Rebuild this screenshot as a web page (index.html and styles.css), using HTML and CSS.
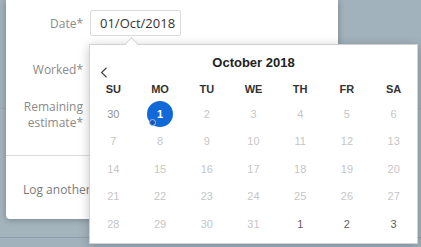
FILE: index.html
```html
<!DOCTYPE html>
<html lang="en">

<head>
    <meta charset="UTF-8">
    <meta name="viewport" content="width=device-width, initial-scale=1.0">
    <link rel="stylesheet" href="styles.css">
</head>

<body>
    <div class="backdrop">
        <div class="bg-row first"></div>
        <div class="bg-row second"></div>
    </div>

    <div class="dialog">
        <div class="form">
            <div class="row">
                <label class="label">Date*</label>
                <div class="field">
                    <div class="date-input">01/Oct/2018</div>

                    <div class="picker">
                        <div class="picker-head">
                            <span class="prev">
                                <svg width="8" height="11" viewBox="0 0 8 11">
                                    <path d="M6.5 0.8 L1.6 5.5 L6.5 10.2" fill="none" stroke="#444" stroke-width="1.2"/>
                                </svg>
                            </span>
                            <span class="month">October 2018</span>
                            <span></span>
                        </div>
                        <div class="days">
                            <div class="wd">SU</div>
                            <div class="wd">MO</div>
                            <div class="wd">TU</div>
                            <div class="wd">WE</div>
                            <div class="wd">TH</div>
                            <div class="wd">FR</div>
                            <div class="wd">SA</div>

                            <div class="d prev-month">30</div>
                            <div class="d"><span class="selected">1<i class="today"></i></span></div>
                            <div class="d off">2</div>
                            <div class="d off">3</div>
                            <div class="d off">4</div>
                            <div class="d off">5</div>
                            <div class="d off">6</div>

                            <div class="d off">7</div>
                            <div class="d off">8</div>
                            <div class="d off">9</div>
                            <div class="d off">10</div>
                            <div class="d off">11</div>
                            <div class="d off">12</div>
                            <div class="d off">13</div>

                            <div class="d off">14</div>
                            <div class="d off">15</div>
                            <div class="d off">16</div>
                            <div class="d off">17</div>
                            <div class="d off">18</div>
                            <div class="d off">19</div>
                            <div class="d off">20</div>

                            <div class="d off">21</div>
                            <div class="d off">22</div>
                            <div class="d off">23</div>
                            <div class="d off">24</div>
                            <div class="d off">25</div>
                            <div class="d off">26</div>
                            <div class="d off">27</div>

                            <div class="d off">28</div>
                            <div class="d off">29</div>
                            <div class="d off">30</div>
                            <div class="d off">31</div>
                            <div class="d next-month">1</div>
                            <div class="d next-month">2</div>
                            <div class="d next-month">3</div>
                        </div>
                    </div>
                </div>
            </div>
            <div class="row">
                <label class="label">Worked*</label>
                <div class="field"></div>
            </div>
            <div class="row tall">
                <label class="label">Remaining<br>estimate*</label>
                <div class="field"></div>
            </div>
        </div>
        <div class="footer">Log another</div>
    </div>
</body>
</html>
```

FILE: styles.css
```css
body {
    margin: 0;
    width: 421px;
    height: 247px;
    overflow: hidden;
    background-color: #a1b2bc;
    font-family: "Open Sans", "Liberation Sans", sans-serif;
    position: relative;
}
.backdrop {
    height: 247px;
}
.bg-row {
    border-bottom: 1px solid #97a8b2;
}
.bg-row.first {
    height: 108px;
}
.bg-row.second {
    height: 128px;
    background-color: #a4b4bd;
    border-bottom-color: #8e9fa9;
}

/* modal */
.dialog {
    position: absolute;
    left: 6px;
    top: 0;
    width: 332px;
    height: 219px;
    background-color: #ffffff;
    border-radius: 0 0 4px 4px;
    box-shadow: 0 1px 6px rgba(0, 0, 0, 0.28);
}
.form {
    padding-top: 10px;
    padding-bottom: 26px;
    border-bottom: 1px solid #dcdcdc;
}
.row {
    display: grid;
    grid-template-columns: 77px 1fr;
    column-gap: 7px;
    align-items: center;
    height: 26px;
    margin-bottom: 20px;
}
.row.tall {
    height: 30px;
    margin-bottom: 0;
    margin-top: -3px;
}
.label {
    text-align: right;
    font-size: 12px;
    line-height: 15px;
    color: #8a8a8a;
}
.row.tall .label {
    line-height: 16px;
}
.field {
    position: relative;
    height: 26px;
}
.date-input {
    box-sizing: border-box;
    width: 91px;
    height: 26px;
    padding-left: 9px;
    border: 1px solid #dadada;
    border-radius: 2px;
    font-size: 13px;
    line-height: 24px;
    color: #333333;
}
.footer {
    padding: 26px 17px 0;
    font-size: 12px;
    line-height: 15px;
    color: #7b7b7b;
}

/* date picker popup */
.picker {
    position: absolute;
    left: -1px;
    top: 34px;
    box-sizing: border-box;
    width: 329px;
    height: 200px;
    background-color: #ffffff;
    border: 1px solid #d2d2d2;
    box-shadow: 0 2px 10px rgba(0, 0, 0, 0.22);
    font-family: "Liberation Sans", Arial, sans-serif;
    z-index: 2;
}
.picker::before {
    content: "";
    position: absolute;
    left: 37px;
    top: -6px;
    width: 8px;
    height: 8px;
    background-color: #ffffff;
    border-top: 1px solid #d2d2d2;
    border-left: 1px solid #d2d2d2;
    transform: rotate(45deg);
}
.picker-head {
    display: grid;
    grid-template-columns: 1fr auto 1fr;
    height: 33px;
}
.prev {
    align-self: end;
    margin-left: 10px;
    height: 11px;
    line-height: 0;
}
.month {
    padding-top: 9px;
    font-size: 13px;
    line-height: 18px;
    font-weight: bold;
    color: #222222;
}
.days {
    display: grid;
    grid-template-columns: repeat(7, 1fr);
    grid-template-rows: 22px repeat(5, 27.5px);
}
.wd {
    font-size: 11px;
    font-weight: bold;
    color: #333333;
    text-align: center;
    line-height: 22px;
}
.d {
    display: flex;
    align-items: center;
    justify-content: center;
    font-size: 11px;
    color: #c6c6c6;
}
.d.prev-month {
    color: #939393;
}
.d.next-month {
    color: #5e5e5e;
}
.selected {
    position: relative;
    width: 26px;
    height: 26px;
    border-radius: 50%;
    background-color: #1169d7;
    color: #ffffff;
    font-weight: bold;
    font-size: 11px;
    line-height: 26px;
    text-align: center;
}
.today {
    position: absolute;
    left: 2px;
    top: 18px;
    width: 5px;
    height: 5px;
    border-radius: 50%;
    background-color: #1a56b0;
    border: 1px solid #9ec3f0;
}
```
